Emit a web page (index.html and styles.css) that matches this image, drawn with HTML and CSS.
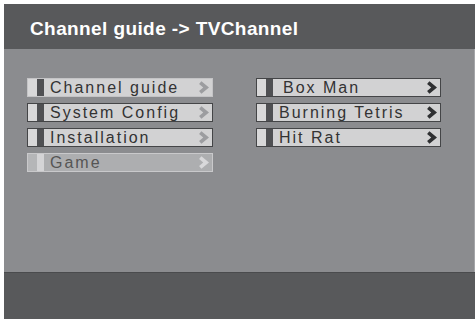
FILE: index.html
```html
<!DOCTYPE html>
<html lang="en">
<head>
  <meta charset="UTF-8" />
  <meta name="viewport" content="width=device-width, initial-scale=1.0"/>
  <title>Channel guide - TVChannel</title>
  <link rel="stylesheet" href="styles.css">
</head>
<body>
  <div class="screen">
    <div class="title-bar">Channel guide -&gt; TVChannel</div>

    <div class="content">
      <div class="menu">
        <div class="item focus">
          <span class="tab"></span><span class="bar"></span>
          <span class="label">Channel guide</span>
          <svg class="arrow" viewBox="0 0 10 12"><polyline points="2,1.5 7.5,6 2,10.5" /></svg>
        </div>
        <div class="item">
          <span class="tab"></span><span class="bar"></span>
          <span class="label">System Config</span>
          <svg class="arrow" viewBox="0 0 10 12"><polyline points="2,1.5 7.5,6 2,10.5" /></svg>
        </div>
        <div class="item">
          <span class="tab"></span><span class="bar"></span>
          <span class="label">Installation</span>
          <svg class="arrow" viewBox="0 0 10 12"><polyline points="2,1.5 7.5,6 2,10.5" /></svg>
        </div>
        <div class="item disabled">
          <span class="tab"></span><span class="bar"></span>
          <span class="label">Game</span>
          <svg class="arrow" viewBox="0 0 10 12"><polyline points="2,1.5 7.5,6 2,10.5" /></svg>
        </div>
      </div>

      <div class="menu sub">
        <div class="item">
          <span class="tab"></span><span class="bar"></span>
          <span class="label indent">Box Man</span>
          <svg class="arrow" viewBox="0 0 10 12"><polyline points="2,1.5 7.5,6 2,10.5" /></svg>
        </div>
        <div class="item">
          <span class="tab"></span><span class="bar"></span>
          <span class="label">Burning Tetris</span>
          <svg class="arrow" viewBox="0 0 10 12"><polyline points="2,1.5 7.5,6 2,10.5" /></svg>
        </div>
        <div class="item">
          <span class="tab"></span><span class="bar"></span>
          <span class="label">Hit Rat</span>
          <svg class="arrow" viewBox="0 0 10 12"><polyline points="2,1.5 7.5,6 2,10.5" /></svg>
        </div>
      </div>
    </div>

    <div class="footer"></div>
  </div>
</body>
</html>
```

FILE: styles.css
```css
body {
  margin: 0;
  background: #fff;
  font-family: 'Liberation Sans', Arial, sans-serif;
}
.screen {
  width: 471px;
  height: 315px;
  margin: 4px 0 0 4px;
  display: flex;
  flex-direction: column;
  background: #8b8c8f;
}
.title-bar {
  height: 45px;
  box-sizing: border-box;
  padding: 14px 0 0 26px;
  background: #58595b;
  color: #fff;
  font-size: 19px;
  font-weight: bold;
  letter-spacing: 0.4px;
  line-height: 21px;
}
.content {
  flex: 1;
  display: flex;
  gap: 43px;
  padding: 29px 0 0 23px;
  border-right: 1px solid #a4a5a8;
}
.menu {
  width: 186px;
  display: flex;
  flex-direction: column;
  gap: 6px;
}
.menu.sub {
  width: 185px;
}
.item {
  height: 19px;
  box-sizing: border-box;
  display: flex;
  align-items: stretch;
  border: 1px solid #444547;
  background: #d2d2d3;
}
.item .tab {
  width: 9px;
  background: #d8d8d9;
}
.item .bar {
  width: 7px;
  background: #4f5053;
}
.item .label {
  flex: 1;
  padding-left: 6px;
  color: #333;
  font-size: 16px;
  letter-spacing: 2px;
  line-height: 17px;
}
.item .label.indent {
  padding-left: 10px;
}
.item .arrow {
  width: 11px;
  height: 13px;
  align-self: center;
  margin-right: 3px;
}
.arrow polyline {
  fill: none;
  stroke: #2f3032;
  stroke-width: 3.4;
}
.menu:not(.sub) .arrow polyline {
  stroke: #9c9da0;
}
.item.focus {
  border-color: #c4c4c6;
}
.item.disabled {
  border-color: #c9c9cb;
  background: #adaeb0;
}
.item.disabled .tab {
  background: #b5b6b8;
}
.item.disabled .bar {
  background: #d4d4d6;
}
.item.disabled .label {
  color: #555;
}
.menu .item.disabled .arrow polyline {
  stroke: #d8d8da;
}
.footer {
  height: 46px;
  background: #58595b;
  border-top: 1px solid #4a4b4d;
}
```
